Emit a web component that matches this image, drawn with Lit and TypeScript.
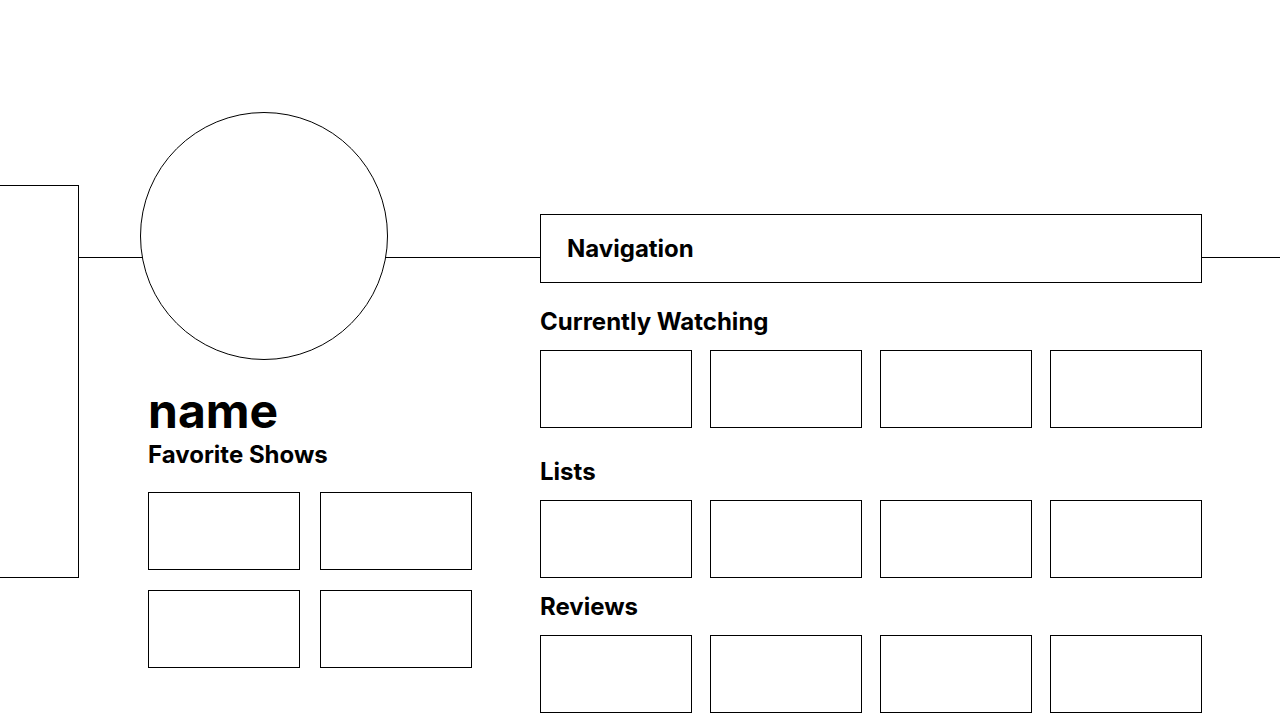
import { LitElement, html, css } from "lit";
import { customElement, property } from "lit/decorators.js";

@customElement("show-row")
export class ShowRow extends LitElement {
  @property() heading = "";
  @property({ type: Number }) count = 4;

  static styles = css`
    :host {
      display: block;
    }
    .heading {
      margin: 0 0 var(--heading-gap, 14px);
      font-size: 24px;
      font-weight: 700;
      line-height: 29px;
    }
    .cards {
      display: grid;
      grid-template-columns: repeat(var(--columns, 4), minmax(0, 1fr));
      gap: var(--card-gap, 18px);
      margin: 0;
      padding: 0;
      list-style: none;
    }
    .card {
      box-sizing: border-box;
      height: 78px;
      border: 1px solid #000;
      background: #fff;
    }
  `;

  render() {
    return html`
      <h2 class="heading">${this.heading}</h2>
      <ul class="cards">
        ${Array.from({ length: this.count }, () => html`<li class="card"></li>`)}
      </ul>
    `;
  }
}

@customElement("app-root")
export class AppRoot extends LitElement {
  static styles = css`
    :host {
      display: block;
      position: relative;
      min-height: 100vh;
      overflow: hidden;
      background: #fff;
      color: #000;
      font-family: Inter, sans-serif;
    }
    * {
      box-sizing: border-box;
    }
    .banner {
      position: absolute;
      inset: 0 0 auto;
      height: 258px;
      border-bottom: 1px solid #000;
    }
    .page {
      position: relative;
      display: grid;
      grid-template-columns: 79px 393px minmax(0, 1fr);
      align-items: start;
      padding: 112px 78px 7px 0;
    }
    .drawer {
      height: 393px;
      margin-top: 73px;
      border: 1px solid #000;
      border-left: 0;
      background: #fff;
    }
    .profile {
      padding-left: 61px;
    }
    .avatar {
      width: 248px;
      height: 248px;
      border: 1px solid #000;
      border-radius: 50%;
      background: #fff;
    }
    .details {
      padding: 22px 0 0 8px;
    }
    .name {
      margin: 0;
      font-size: 48px;
      font-weight: 700;
      line-height: 58px;
    }
    .favorites {
      --columns: 2;
      --card-gap: 20px;
      --heading-gap: 23px;
    }
    .content {
      margin: 102px 0 0 68px;
    }
    .nav {
      height: 69px;
      padding: 19px 26px;
      border: 1px solid #000;
      background: #fff;
      font-size: 24px;
      font-weight: 700;
      line-height: 29px;
    }
    .watching {
      margin-top: 24px;
    }
    .lists {
      margin-top: 29px;
    }
    .reviews {
      margin-top: 14px;
    }
  `;

  render() {
    return html`
      <div class="banner"></div>
      <div class="page">
        <aside class="drawer"></aside>
        <section class="profile">
          <div class="avatar"></div>
          <div class="details">
            <h1 class="name">name</h1>
            <show-row class="favorites" heading="Favorite Shows" count="4"></show-row>
          </div>
        </section>
        <main class="content">
          <nav class="nav">Navigation</nav>
          <show-row class="watching" heading="Currently Watching"></show-row>
          <show-row class="lists" heading="Lists"></show-row>
          <show-row class="reviews" heading="Reviews"></show-row>
        </main>
      </div>
    `;
  }
}
